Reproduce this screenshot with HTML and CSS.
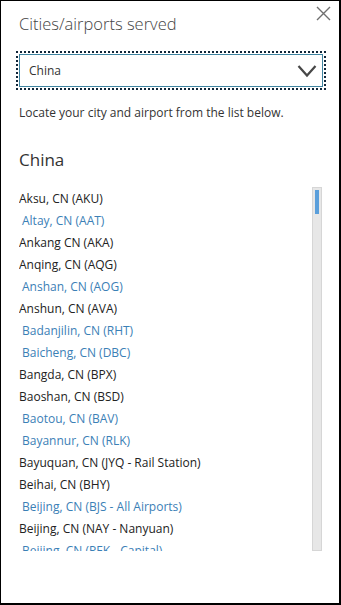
FILE: index.html
```html
<!doctype html>
<html lang="en">
<head>
<meta charset="UTF-8">
<title>Cities/airports served</title>
<link rel="stylesheet" href="styles.css">
</head>
<body>
<div class="dialog">
	<!-- close button -->
	<button class="close" aria-label="Close">
		<svg width="15" height="15" viewBox="0 0 15 15"><path d="M1 1L14 14M14 1L1 14" stroke="#6f6f6f" stroke-width="1.4" fill="none"/></svg>
	</button>

	<h1 class="title">Cities/airports served</h1>

	<div class="select">
		<span class="select_value">China</span>
		<svg class="chevron" width="20" height="14" viewBox="0 0 20 14"><path d="M1.5 2L10 11.5L18.5 2" stroke="#474747" stroke-width="2.2" fill="none"/></svg>
	</div>

	<p class="hint">Locate your city and airport from the list below.</p>

	<h2 class="country">China</h2>

	<div class="list_wrap">
		<ul class="list">
			<li>Aksu, CN (AKU)</li>
			<li class="link">Altay, CN (AAT)</li>
			<li>Ankang CN (AKA)</li>
			<li>Anqing, CN (AQG)</li>
			<li class="link">Anshan, CN (AOG)</li>
			<li>Anshun, CN (AVA)</li>
			<li class="link">Badanjilin, CN (RHT)</li>
			<li class="link">Baicheng, CN (DBC)</li>
			<li>Bangda, CN (BPX)</li>
			<li>Baoshan, CN (BSD)</li>
			<li class="link">Baotou, CN (BAV)</li>
			<li class="link">Bayannur, CN (RLK)</li>
			<li>Bayuquan, CN (JYQ - Rail Station)</li>
			<li>Beihai, CN (BHY)</li>
			<li class="link">Beijing, CN (BJS - All Airports)</li>
			<li>Beijing, CN (NAY - Nanyuan)</li>
			<li class="link">Beijing, CN (PEK - Capital)</li>
		</ul>
		<div class="scrollbar"><div class="thumb"></div></div>
	</div>
</div>
</body>
</html>
```
FILE: styles.css
```css
body{
	margin:0;
	font-family:"Open Sans", "Noto Sans", sans-serif;
	color:#333333;
}
.dialog{
	position:relative;
	box-sizing:border-box;
	width:341px; height:605px;
	border:solid #000000;
	border-width:1px 2px 2px 1px;
	padding:11px 16px 0 18px;
	display:flex; flex-direction:column;
	background:#ffffff;
}
.close{
	position:absolute; top:5px; right:8px;
	border:0; background:none; padding:0;
	width:15px; height:15px;
}
.close svg{ display:block; }
.title{
	margin:0 0 18px 0;
	font-size:16.5px; line-height:24px;
	font-weight:300; color:#444444;
}
.select{
	height:33px;
	box-sizing:border-box;
	border:1px solid #3f84a0;
	outline:2px dotted #10263a;
	outline-offset:1px;
	display:flex; align-items:center;
	justify-content:space-between;
	padding:0 5px 0 9px;
}
.select_value{
	font-size:12px; color:#333333;
}
.chevron{ display:block; }
.hint{
	margin:17px 0 0 0;
	font-size:12px; line-height:18px;
}
.country{
	margin:26px 0 0 0;
	font-size:17px; line-height:24px;
	font-weight:400; color:#333333;
}
.list_wrap{
	margin-top:15px;
	height:364px;
	display:flex;
}
.list{
	flex:1;
	margin:0; padding:1px 0 0 0;
	list-style:none;
	overflow:hidden;
}
.list li{
	font-size:12px; line-height:22px;
	white-space:nowrap; color:#222222;
}
.list li.link{
	padding-left:3px; color:#3b80b6;
}
.scrollbar{
	width:8px;
	margin-right:1px;
	background:#e7e7e7;
	border:1px solid #d6d6d6;
	padding-top:2px;
}
.thumb{
	width:4px; height:24px;
	margin-left:2px;
	background:#5a9fdb;
}
```
